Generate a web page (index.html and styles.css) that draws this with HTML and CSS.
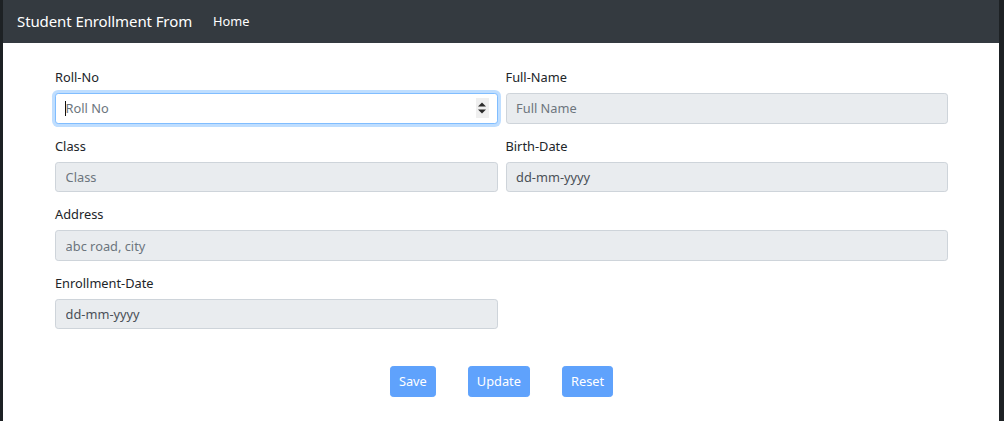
FILE: index.html
```html
<!DOCTYPE html>
<html lang="en">
<head>
<meta charset="utf-8">
<title>Student Enrollment From</title>
<link rel="stylesheet" href="styles.css">
</head>
<body>
<div class="frame">
  <nav class="navbar">
    <span class="brand">Student Enrollment From</span>
    <a class="nav-link" href="#">Home</a>
  </nav>
  <main class="content">
    <form class="form">
      <div class="row">
        <div class="group">
          <label class="label">Roll-No</label>
          <div class="field-wrap">
            <input class="control focused" type="text" placeholder="Roll No">
            <span class="caret"></span>
            <span class="spinner">
              <svg width="10" height="14" viewBox="0 0 10 14"><path d="M1 5.5 L5 1.5 L9 5.5 Z" fill="#2b2b2b"/><path d="M1 8.5 L5 12.5 L9 8.5 Z" fill="#2b2b2b"/></svg>
            </span>
          </div>
        </div>
        <div class="group">
          <label class="label">Full-Name</label>
          <input class="control" type="text" placeholder="Full Name" disabled>
        </div>
      </div>
      <div class="row">
        <div class="group">
          <label class="label">Class</label>
          <input class="control" type="text" placeholder="Class" disabled>
        </div>
        <div class="group">
          <label class="label">Birth-Date</label>
          <input class="control dated" type="text" placeholder="dd-mm-yyyy" disabled>
        </div>
      </div>
      <div class="row">
        <div class="group full">
          <label class="label">Address</label>
          <input class="control" type="text" placeholder="abc road, city" disabled>
        </div>
      </div>
      <div class="row">
        <div class="group">
          <label class="label">Enrollment-Date</label>
          <input class="control dated" type="text" placeholder="dd-mm-yyyy" disabled>
        </div>
        <div class="group"></div>
      </div>
      <div class="actions">
        <button class="btn" type="button" disabled>Save</button>
        <button class="btn" type="button" disabled>Update</button>
        <button class="btn" type="button" disabled>Reset</button>
      </div>
    </form>
  </main>
</div>
</body>
</html>
```
FILE: styles.css
```css
* { box-sizing: border-box; }
html, body {
  margin: 0;
  padding: 0;
  height: 100%;
  background: #1d2124;
}
body {
  font-family: "Noto Sans", "Open Sans", sans-serif;
  font-size: 12.8px;
  line-height: 1.5;
  color: #212529;
}
.frame {
  margin: 0 5px 0 3px;
  min-height: 100%;
  background: #ffffff;
}
.navbar {
  height: 43px;
  background: #343a40;
  display: flex;
  align-items: center;
  padding: 0 14px;
}
.brand {
  color: #ffffff;
  font-size: 15px;
  margin-right: 21px;
  letter-spacing: -0.1px;
}
.nav-link {
  color: #ffffff;
  text-decoration: none;
  font-size: 12.8px;
}
.content {
  padding: 25px 51px 0 52px;
}
.row {
  display: flex;
  gap: 8px;
}
.group {
  flex: 1 1 0;
  margin-bottom: 12.9px;
}
.label {
  display: block;
  margin-bottom: 6px;
  color: #212529;
}
.field-wrap { position: relative; }
.control {
  display: block;
  width: 100%;
  height: 30.5px;
  padding: 4.8px 9.6px;
  font: inherit;
  color: #495057;
  background: #e9ecef;
  border: 1px solid #ced4da;
  border-radius: 3.2px;
  outline: none;
}
.control::placeholder { color: #6c757d; opacity: 1; }
.control.dated::placeholder { color: #495057; }
.control.focused {
  background: #ffffff;
  border-color: #80bdff;
  box-shadow: 0 0 0 3px rgba(0, 123, 255, 0.25);
}
.caret {
  position: absolute;
  left: 10px;
  top: 8px;
  width: 1px;
  height: 15px;
  background: #111;
}
.spinner {
  position: absolute;
  right: 9px;
  top: 5px;
  width: 13px;
  height: 20px;
  background: #efefef;
  display: flex;
  align-items: center;
  justify-content: center;
}
.actions {
  display: flex;
  justify-content: center;
  gap: 32px;
  margin-top: 24px;
}
.btn {
  font: inherit;
  color: #ffffff;
  background: #5fa2fc;
  border: 1px solid #5fa2fc;
  border-radius: 3.2px;
  height: 31px;
  padding: 0 8px;
}
```
